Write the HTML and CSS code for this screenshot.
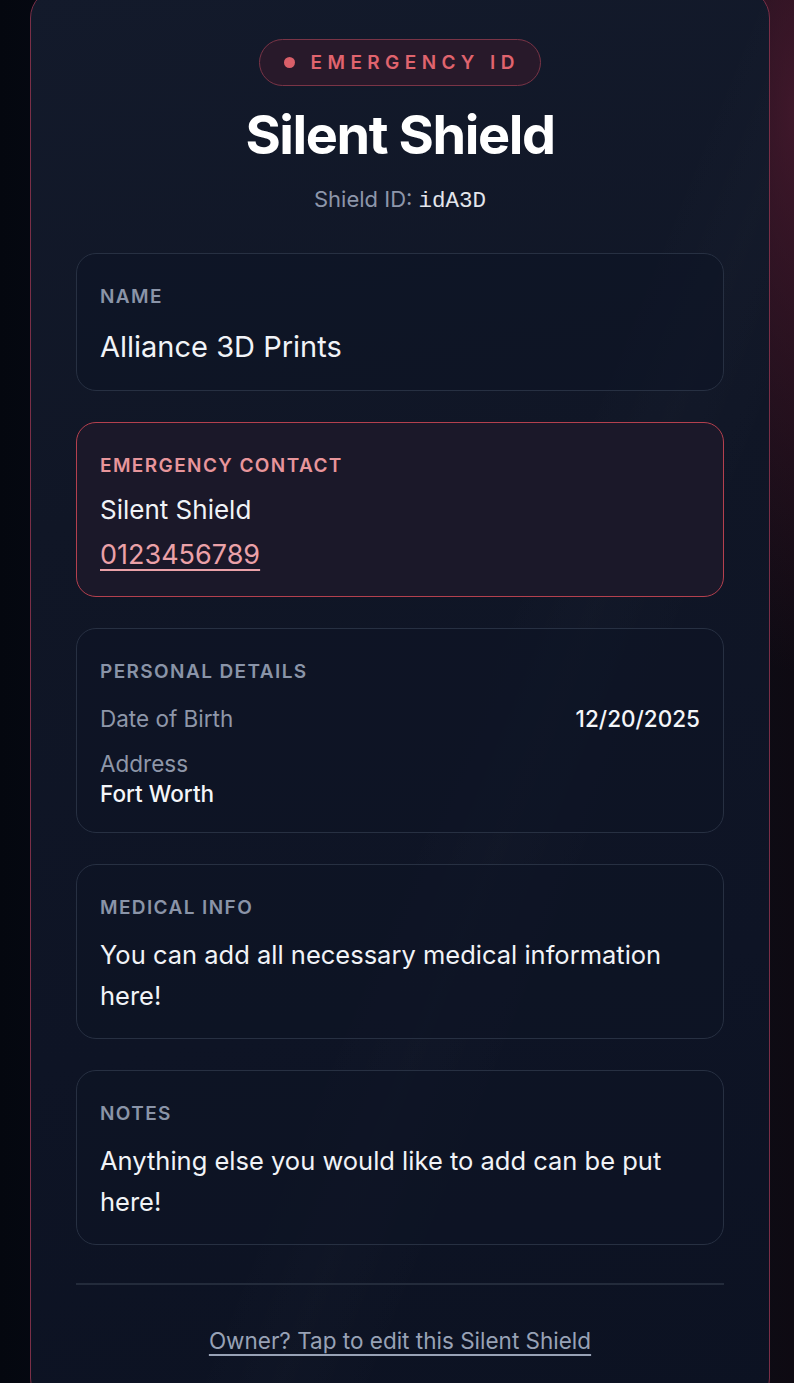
FILE: index.html
```html
<!DOCTYPE html>
<html lang="en">
<head>
<meta charset="utf-8">
<title>Silent Shield – Emergency ID</title>
<link rel="stylesheet" href="styles.css">
</head>
<body>
<div class="page">
  <main class="card">
    <header class="head">
      <div class="badge"><span class="badge-dot"></span><span class="badge-text">EMERGENCY ID</span></div>
      <h1 class="title">Silent Shield</h1>
      <p class="shield-id">Shield ID: <code class="mono">idA3D</code></p>
    </header>

    <section class="panel panel-name">
      <div class="label">NAME</div>
      <div class="value-lg">Alliance 3D Prints</div>
    </section>

    <section class="panel panel-alert">
      <div class="label label-alert">EMERGENCY CONTACT</div>
      <div class="contact-name">Silent Shield</div>
      <a class="phone" href="#">0123456789</a>
    </section>

    <section class="panel panel-details">
      <div class="label">PERSONAL DETAILS</div>
      <div class="row">
        <span class="muted">Date of Birth</span>
        <span class="strong">12/20/2025</span>
      </div>
      <div class="stack">
        <span class="muted">Address</span>
        <span class="strong">Fort Worth</span>
      </div>
    </section>

    <section class="panel">
      <div class="label">MEDICAL INFO</div>
      <p class="body">You can add all necessary medical information here!</p>
    </section>

    <section class="panel">
      <div class="label">NOTES</div>
      <p class="body">Anything else you would like to add can be put here!</p>
    </section>

    <hr class="divider">

    <footer class="foot">
      <a class="edit-link" href="#">Owner? Tap to edit this Silent Shield</a>
    </footer>
  </main>
</div>
</body>
</html>
```

FILE: styles.css
```css
* { box-sizing: border-box; }

html, body {
  margin: 0;
  padding: 0;
}

body {
  min-height: 1383px;
  overflow: hidden;
  font-family: Inter, "Noto Sans", "Liberation Sans", sans-serif;
  color: #f1f3f7;
  background:
    radial-gradient(ellipse 220px 800px at 100% 8%, rgba(95, 32, 58, 0.6), rgba(95, 32, 58, 0) 70%),
    linear-gradient(90deg, #04070f 0%, #0a0f1c 40%, #0b0f1b 80%, #0e0a12 100%);
}

.page {
  padding: 0 24px 0 30px;
}

.card {
  margin-top: -12px;
  min-height: 1420px;
  border: 1.5px solid #7a2f47;
  border-radius: 30px;
  padding: 50px 45px 40px;
  background:
    linear-gradient(112deg, rgba(255,255,255,0) 55%, rgba(255,255,255,0.012) 62%, rgba(255,255,255,0) 70%),
    linear-gradient(170deg, #131a2b 0%, #101626 35%, #0e1425 70%, #0c1222 100%);
  display: flex;
  flex-direction: column;
  gap: 31px;
}

.head {
  display: flex;
  flex-direction: column;
  align-items: center;
  margin-bottom: 9px;
}

.badge {
  display: inline-flex;
  align-items: center;
  gap: 16px;
  height: 47px;
  padding: 0 26px 0 24px;
  border: 1.5px solid #7a3446;
  border-radius: 24px;
  background: #28192a;
}

.badge-dot {
  width: 11px;
  height: 11px;
  border-radius: 50%;
  background: #d95f69;
}

.badge-text {
  font-size: 19px;
  font-weight: 600;
  letter-spacing: 5.4px;
  color: #e0646e;
  margin-right: -5.4px;
}

.title {
  margin: 19px 0 0;
  font-size: 54px;
  line-height: 59px;
  font-weight: 700;
  letter-spacing: -1.4px;
  color: #ffffff;
}

.shield-id {
  margin: 21px 0 0;
  font-size: 22px;
  line-height: 28px;
  height: 28px;
  color: #8d96aa;
}

.mono {
  font-family: "Liberation Mono", "DejaVu Sans Mono", monospace;
  font-size: 22.5px;
  line-height: 1;
  color: #e3e6ec;
}

.panel {
  border: 1.5px solid #273042;
  border-radius: 20px;
  padding: 31px 23px 22px;
  background: rgba(14, 20, 36, 0.6);
  display: flex;
  flex-direction: column;
}

.panel-alert {
  border-color: #b4404e;
  background: #1b1829;
  padding-bottom: 23px;
}

.panel-details {
  padding-bottom: 24px;
}

.label {
  font-size: 19px;
  line-height: 24px;
  font-weight: 600;
  letter-spacing: 1.4px;
  color: #8a94a8;
}

.label-alert {
  color: #e8959b;
}

.value-lg {
  margin-top: 16px;
  font-size: 29px;
  line-height: 43px;
  color: #f1f3f7;
}

.contact-name {
  margin-top: 14px;
  font-size: 26px;
  line-height: 35px;
  color: #f1f3f7;
}

.phone {
  margin-top: 10px;
  font-size: 27px;
  line-height: 36px;
  color: #eba1a8;
  text-decoration: underline;
  text-underline-offset: 5px;
  text-decoration-thickness: 1.5px;
  align-self: flex-start;
}

.row {
  margin-top: 20px;
  display: flex;
  justify-content: space-between;
  align-items: baseline;
  font-size: 22.5px;
  line-height: 30px;
}

.stack {
  margin-top: 16px;
  display: flex;
  flex-direction: column;
  gap: 2px;
  font-size: 22.5px;
  line-height: 28px;
}

.muted {
  color: #8e97a9;
}

.strong {
  color: #f4f6f9;
  font-weight: 500;
}

.body {
  margin: 14px 0 0;
  font-size: 25.5px;
  line-height: 41px;
  color: #f1f3f7;
}

.divider {
  margin: 7px 0 0;
  border: 0;
  height: 1.5px;
  background: #232b3b;
}

.foot {
  display: flex;
  justify-content: center;
  margin-top: 11px;
}

.edit-link {
  font-size: 22.5px;
  line-height: 28px;
  color: #98a2b6;
  text-decoration: underline;
  text-underline-offset: 5px;
  text-decoration-thickness: 1.5px;
}
```
